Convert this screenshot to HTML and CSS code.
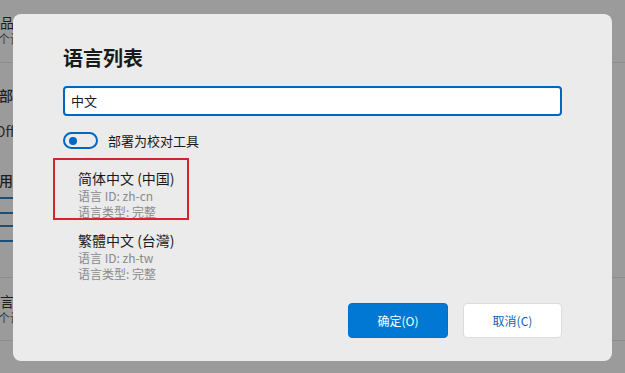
FILE: index.html
```html
<!DOCTYPE html>
<html lang="zh-CN">
<head>
<meta charset="utf-8">
<link rel="stylesheet" href="styles.css">
</head>
<body>
<div class="page">
  <div class="bg">
    <div class="bg-row r1">
      <div class="bg-title shift">产品</div>
      <div class="bg-sub">个设</div>
    </div>
    <div class="bg-row r2">
      <div class="bg-title strong">部署</div>
      <div class="bg-off">Off</div>
    </div>
    <div class="bg-row r3">
      <div class="bg-title strong">用程</div>
      <div class="bg-field"></div>
      <div class="bg-field second"></div>
    </div>
    <div class="bg-row r4">
      <div class="bg-title shift">语言</div>
      <div class="bg-sub">个设</div>
    </div>
  </div>

  <div class="dialog">
    <h1 class="dlg-title">语言列表</h1>
    <div class="search">中文</div>
    <div class="toggle-row">
      <span class="toggle"><span class="knob"></span></span>
      <span class="toggle-label">部署为校对工具</span>
    </div>
    <ul class="langs">
      <li class="lang selected">
        <div class="lang-name">简体中文 (中国)</div>
        <div class="lang-meta">语言 ID: zh-cn</div>
        <div class="lang-meta">语言类型: 完整</div>
      </li>
      <li class="lang">
        <div class="lang-name">繁體中文 (台灣)</div>
        <div class="lang-meta">语言 ID: zh-tw</div>
        <div class="lang-meta">语言类型: 完整</div>
      </li>
    </ul>
    <div class="actions">
      <button class="btn primary">确定(O)</button>
      <button class="btn secondary">取消(C)</button>
    </div>
  </div>
</div>
</body>
</html>
```
FILE: styles.css
```css
* { box-sizing: border-box; }
html, body { margin: 0; padding: 0; }
body {
  width: 625px;
  height: 373px;
  overflow: hidden;
  background: #9b9b9b;
  font-family: "Noto Sans CJK SC", "Noto Sans", sans-serif;
  color: #1b1b1b;
}
.page { position: relative; width: 625px; height: 373px; }

/* dimmed settings page behind the dialog */
.bg { display: flex; flex-direction: column; }
.bg-row { border-bottom: 1px solid #8c8c8c; padding-left: 0; }
.bg-title { font-size: 14px; line-height: 18px; color: #1e1e1e; white-space: nowrap; }
.bg-title.shift { margin-left: -14px; }
.bg-title.strong { font-weight: 500; margin-left: -1px; }
.bg-sub { font-size: 12px; line-height: 16px; color: #3a3a3a; margin-left: -2px; white-space: nowrap; }
.r1 { height: 63px; padding-top: 13px; }
.r2 { height: 104px; border-bottom: none; padding-top: 23px; }
.bg-off { margin-top: 18px; margin-left: -5px; font-size: 14px; line-height: 18px; color: #2a2a2a; }
.r3 { height: 111px; padding-top: 4px; }
.bg-field { height: 17px; border-top: 2px solid #1c4f77; border-bottom: 2px solid #1c4f77; margin-top: 8px; width: 40px; }
.bg-field.second { margin-top: 11px; }
.r4 { height: 63px; padding-top: 14px; }

/* dialog */
.dialog {
  position: absolute;
  left: 13px;
  top: 14px;
  width: 599px;
  height: 347px;
  background: #ebebeb;
  border-radius: 8px;
  padding: 30px 50px 0 50px;
  display: flex;
  flex-direction: column;
}
.dlg-title {
  margin: 0;
  font-size: 20px;
  line-height: 28px;
  font-weight: 700;
  color: #1a1a1a;
}
.search {
  margin-top: 14px;
  width: 499px;
  height: 30px;
  border: 2px solid #0067c0;
  border-radius: 4px;
  background: #fff;
  padding: 0 6px;
  font-size: 13px;
  line-height: 26px;
  color: #1a1a1a;
}
.toggle-row {
  margin-top: 16px;
  display: flex;
  align-items: center;
  gap: 10px;
  height: 17px;
}
.toggle {
  width: 35px;
  height: 17px;
  border: 2px solid #0067c0;
  border-radius: 9px;
  display: flex;
  align-items: center;
  padding-left: 4px;
}
.knob { width: 8px; height: 8px; border-radius: 50%; background: #0067c0; }
.toggle-label { font-size: 13px; color: #1a1a1a; }

.langs { list-style: none; margin: 9px 0 0 -10px; padding: 0; }
.lang {
  width: 136px;
  height: 62px;
  padding: 8px 0 0 23px;
  border: 2px solid transparent;
}
.lang.selected { border-color: #d4252d; }
.lang-name { font-size: 14px; line-height: 20px; color: #1a1a1a; white-space: nowrap; }
.lang-meta { font-size: 12px; line-height: 16px; color: #8a8a8a; white-space: nowrap; }

.actions {
  margin-top: auto;
  margin-bottom: 23px;
  display: flex;
  justify-content: flex-end;
  gap: 15px;
}
.btn {
  width: 100px;
  height: 35px;
  border-radius: 4px;
  font-family: "Noto Sans CJK SC", "Noto Sans", sans-serif;
  font-size: 12px;
  cursor: pointer;
}
.btn.primary { background: #0078d4; color: #fff; border: 1px solid #0071c8; }
.btn.secondary { background: #fff; color: #0a64b3; border: 1px solid #dcdcdc; width: 99px; }
```
